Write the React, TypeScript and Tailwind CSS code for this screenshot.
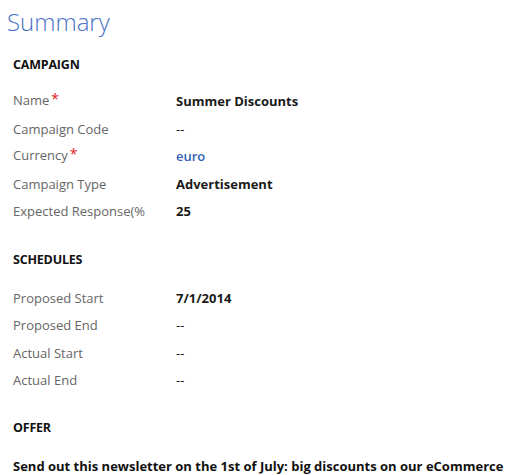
const FONT = "font-['Open_Sans','Noto_Sans',sans-serif]";

type Field = { label: string; value: string; required?: boolean; link?: boolean; bold?: boolean };

const campaign: Field[] = [
  { label: 'Name', value: 'Summer Discounts', required: true, bold: true },
  { label: 'Campaign Code', value: '--' },
  { label: 'Currency', value: 'euro', required: true, link: true },
  { label: 'Campaign Type', value: 'Advertisement', bold: true },
  { label: 'Expected Response(%', value: '25', bold: true },
];

const schedules: Field[] = [
  { label: 'Proposed Start', value: '7/1/2014', bold: true },
  { label: 'Proposed End', value: '--' },
  { label: 'Actual Start', value: '--' },
  { label: 'Actual End', value: '--' },
];

function Row({ f }: { f: Field }) {
  return (
    <div className="flex items-center h-[27.5px]">
      <div className="w-[163px] text-[13px] text-[#666666] whitespace-nowrap">
        {f.label}
        {f.required && <span className="text-[#e0211d] text-[14px] align-top relative -top-[3px] ml-[2px]">*</span>}
      </div>
      <div
        className={
          f.link
            ? 'text-[13px] font-semibold text-[#2f5fb3]'
            : f.bold
              ? 'text-[13px] font-bold text-[#1a1a1a]'
              : 'text-[13px] text-[#1a1a1a]'
        }
      >
        {f.value}
      </div>
    </div>
  );
}

function Section({ title }: { title: string }) {
  return <div className="text-[12.5px] font-bold text-[#111] tracking-[-0.2px] h-[20px] leading-[20px]">{title}</div>;
}

export default function App() {
  return (
    <div className={`w-[517px] h-[475px] bg-white overflow-hidden ${FONT}`}>
      <div className="pl-[7px] pt-[6px] text-[24px] leading-[32px] font-light text-[#4a72c7]">Summary</div>
      <div className="pl-[13px]">
        <div className="mt-[17px]">
          <Section title="CAMPAIGN" />
        </div>
        <div className="mt-[13px]">
          {campaign.map((f) => (
            <Row key={f.label} f={f} />
          ))}
        </div>
        <div className="mt-[24px]">
          <Section title="SCHEDULES" />
        </div>
        <div className="mt-[15px]">
          {schedules.map((f) => (
            <Row key={f.label} f={f} />
          ))}
        </div>
        <div className="mt-[23px]">
          <Section title="OFFER" />
        </div>
        <div className="mt-[19px] text-[13px] leading-[18px] font-bold text-[#111] whitespace-nowrap">
          Send out this newsletter on the 1st of July: big discounts on our eCommerce
        </div>
      </div>
    </div>
  );
}
